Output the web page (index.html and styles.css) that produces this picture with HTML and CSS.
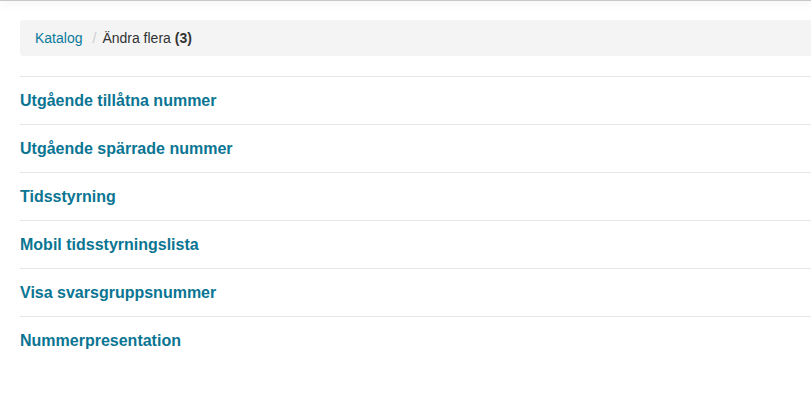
FILE: index.html
```html
<!DOCTYPE html>
<html lang="sv">
<head>
<meta charset="utf-8">
<title>Ändra flera</title>
<link rel="stylesheet" href="styles.css">
</head>
<body>
<div class="topbar"></div>
<main class="page">
  <ol class="breadcrumb">
    <li><a href="#">Katalog</a></li>
    <li class="active">Ändra flera <b>(3)</b></li>
  </ol>
  <ul class="sections">
    <li><a href="#">Utgående tillåtna nummer</a></li>
    <li><a href="#">Utgående spärrade nummer</a></li>
    <li><a href="#">Tidsstyrning</a></li>
    <li><a href="#">Mobil tidsstyrningslista</a></li>
    <li><a href="#">Visa svarsgruppsnummer</a></li>
    <li><a href="#">Nummerpresentation</a></li>
  </ul>
</main>
</body>
</html>
```

FILE: styles.css
```css
html, body {
  margin: 0;
  padding: 0;
  background: #fff;
  overflow: hidden;
}
body {
  font-family: "Liberation Sans", Arial, sans-serif;
  font-size: 14px;
  color: #333;
}
.topbar {
  height: 1px;
  background: #c8c8c8;
  box-shadow: 0 1px 8px rgba(0, 0, 0, 0.25);
}
.page {
  padding: 19px 0 0 20px;
  margin-right: -200px;
}
.breadcrumb {
  list-style: none;
  margin: 0 0 20px;
  padding: 8px 15px;
  line-height: 20px;
  background: #f4f4f4;
  border-radius: 4px;
  display: flex;
}
.breadcrumb a {
  color: #0a7a9c;
  text-decoration: none;
}
.breadcrumb li + li::before {
  content: "/";
  color: #ccc;
  padding: 0 6px 0 10px;
}
.breadcrumb .active {
  color: #333;
}
.breadcrumb b {
  font-weight: bold;
}
.sections {
  list-style: none;
  margin: 0;
  padding: 0;
}
.sections li {
  border-top: 1px solid #e6e6e6;
  height: 47px;
  display: flex;
  align-items: center;
}
.sections a {
  color: #0a7593;
  font-weight: bold;
  font-size: 16px;
  text-decoration: none;
}
```
